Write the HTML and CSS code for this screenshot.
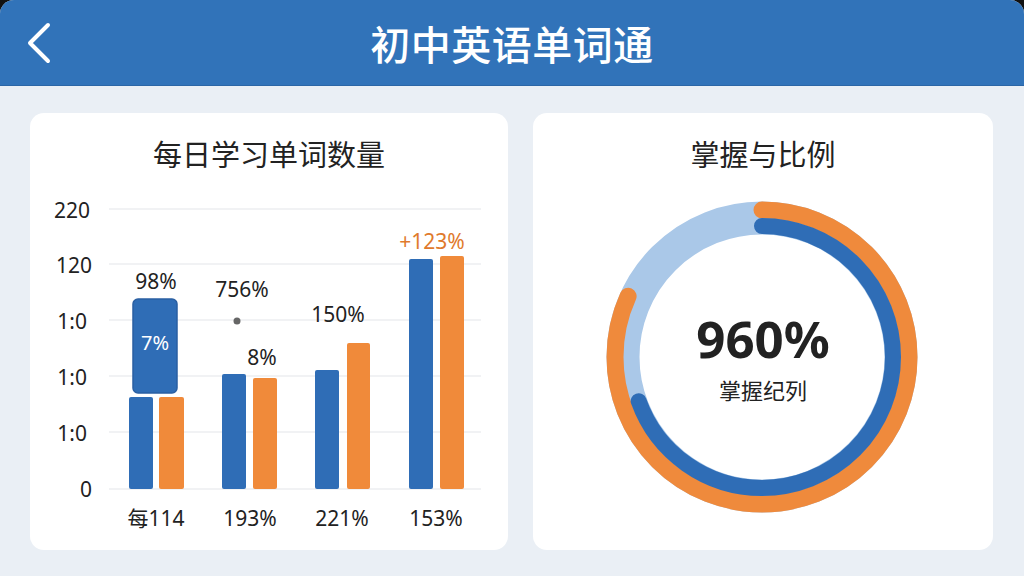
FILE: index.html
```html
<!DOCTYPE html>
<html>
<head>
<meta charset="utf-8">
<title>初中英语单词通</title>
<link rel="stylesheet" href="styles.css">
</head>
<body>

<div class="screen">

  <header class="topbar">
    <svg class="back" width="30" height="46" viewBox="0 0 30 46">
      <polyline points="22,4 4,22 22,40" />
    </svg>
    <h1 class="topbar-title">初中英语单词通</h1>
  </header>

  <main class="cards">

    <section class="card">
      <h2 class="card-title">每日学习单词数量</h2>
      <svg class="bars" width="478" height="377" viewBox="0 0 478 377">
        <g class="grid">
          <line x1="79" y1="36" x2="451" y2="36" />
          <line x1="79" y1="91" x2="451" y2="91" />
          <line x1="79" y1="147" x2="451" y2="147" />
          <line x1="79" y1="203" x2="451" y2="203" />
          <line x1="79" y1="259" x2="451" y2="259" />
          <line x1="79" y1="316" x2="451" y2="316" />
        </g>
        <g class="axis">
          <text x="60" y="37">220</text>
          <text x="62" y="92">120</text>
          <text x="57" y="148">1:0</text>
          <text x="57" y="204">1:0</text>
          <text x="57" y="260">1:0</text>
          <text x="62" y="316">0</text>
        </g>
        <g class="blue">
          <rect x="99" y="224" width="24" height="92" rx="2" />
          <rect x="192" y="201" width="24" height="115" rx="2" />
          <rect x="285" y="197" width="24" height="119" rx="2" />
          <rect x="379" y="86" width="24" height="230" rx="2" />
        </g>
        <g class="orange">
          <rect x="129" y="224" width="25" height="92" rx="2" />
          <rect x="223" y="205" width="24" height="111" rx="2" />
          <rect x="317" y="170" width="23" height="146" rx="2" />
          <rect x="410" y="83" width="24" height="233" rx="2" />
        </g>
        <rect class="callout" x="103" y="126" width="44" height="94" rx="5" />
        <text class="callout-text" x="125" y="169">7%</text>
        <g class="value">
          <text x="126" y="108">98%</text>
          <text x="212" y="116">756%</text>
          <text x="232" y="184">8%</text>
          <text x="308" y="141">150%</text>
          <text class="up" x="402" y="68">+123%</text>
        </g>
        <circle class="dot" cx="207" cy="148" r="3.5" />
        <g class="value">
          <text x="126" y="345">每114</text>
          <text x="220" y="345">193%</text>
          <text x="312" y="345">221%</text>
          <text x="406" y="345">153%</text>
        </g>
      </svg>
    </section>

    <section class="card">
      <h2 class="card-title">掌握与比例</h2>
      <svg class="donut" width="460" height="377" viewBox="0 0 460 377">
        <circle class="ring-bg" cx="229" cy="184" r="139" />
        <circle class="ring-orange" cx="229" cy="184" r="147" stroke-dasharray="755 1000" transform="rotate(-90 229 184)" />
        <circle class="ring-blue" cx="229" cy="184" r="131" stroke-dasharray="572 1000" transform="rotate(-90 229 184)" />
        <text class="big" x="230" y="165">960%</text>
        <text class="small" x="230" y="217">掌握纪列</text>
      </svg>
    </section>

  </main>

</div>

</body>
</html>
```

FILE: styles.css
```css
*{ margin: 0; padding: 0; box-sizing: border-box; }
html, body{ background: #111; }
body{ font-family: "Noto Sans", "Noto Sans CJK SC", sans-serif; color: #222; }

.screen{ width: 1024px; height: 576px; overflow: hidden; border-radius: 14px 14px 0 0; background: #eaeff5; }

.topbar{ height: 86px; background: #3173b9; display: flex; align-items: center; justify-content: center; position: relative; border-bottom: 1px solid #2b66a6; }
.back{ position: absolute; left: 26px; top: 21px; }
.back polyline{ fill: none; stroke: #fff; stroke-width: 4; stroke-linecap: round; stroke-linejoin: round; }
.topbar-title{ font-size: 40px; font-weight: 500; color: #fff; letter-spacing: 0.5px; }

.cards{ display: flex; gap: 25px; padding: 27px 31px 0 30px; }
.card{ height: 437px; background: #fff; border-radius: 14px; }
.card:first-child{ width: 478px; }
.card:last-child{ width: 460px; }
.card-title{ font-size: 29px; font-weight: 400; text-align: center; line-height: 36px; padding-top: 24px; }
.bars, .donut{ display: block; }

.grid line{ stroke: #e3e6ea; stroke-width: 1.2; }
.axis text{ font-size: 21px; fill: #222; text-anchor: end; dominant-baseline: central; }
.blue rect{ fill: #2f6db6; }
.orange rect{ fill: #f08a3a; }
.callout{ fill: #2f6db6; stroke: #2a5fa2; stroke-width: 1.5; }
.callout-text{ font-size: 20px; fill: #fff; text-anchor: middle; dominant-baseline: central; }
.value text{ font-size: 21px; fill: #222; text-anchor: middle; dominant-baseline: central; }
.value .up{ fill: #e07a2c; }
.dot{ fill: #666; }

.ring-bg{ fill: none; stroke: #aac8e8; stroke-width: 33; }
.ring-orange{ fill: none; stroke: #ef8a3c; stroke-width: 17; stroke-linecap: round; }
.ring-blue{ fill: none; stroke: #2f6db6; stroke-width: 16; stroke-linecap: round; }
.big{ font-size: 51px; font-weight: 700; fill: #222; text-anchor: middle; dominant-baseline: central; }
.small{ font-size: 22px; fill: #222; text-anchor: middle; dominant-baseline: central; }
```
